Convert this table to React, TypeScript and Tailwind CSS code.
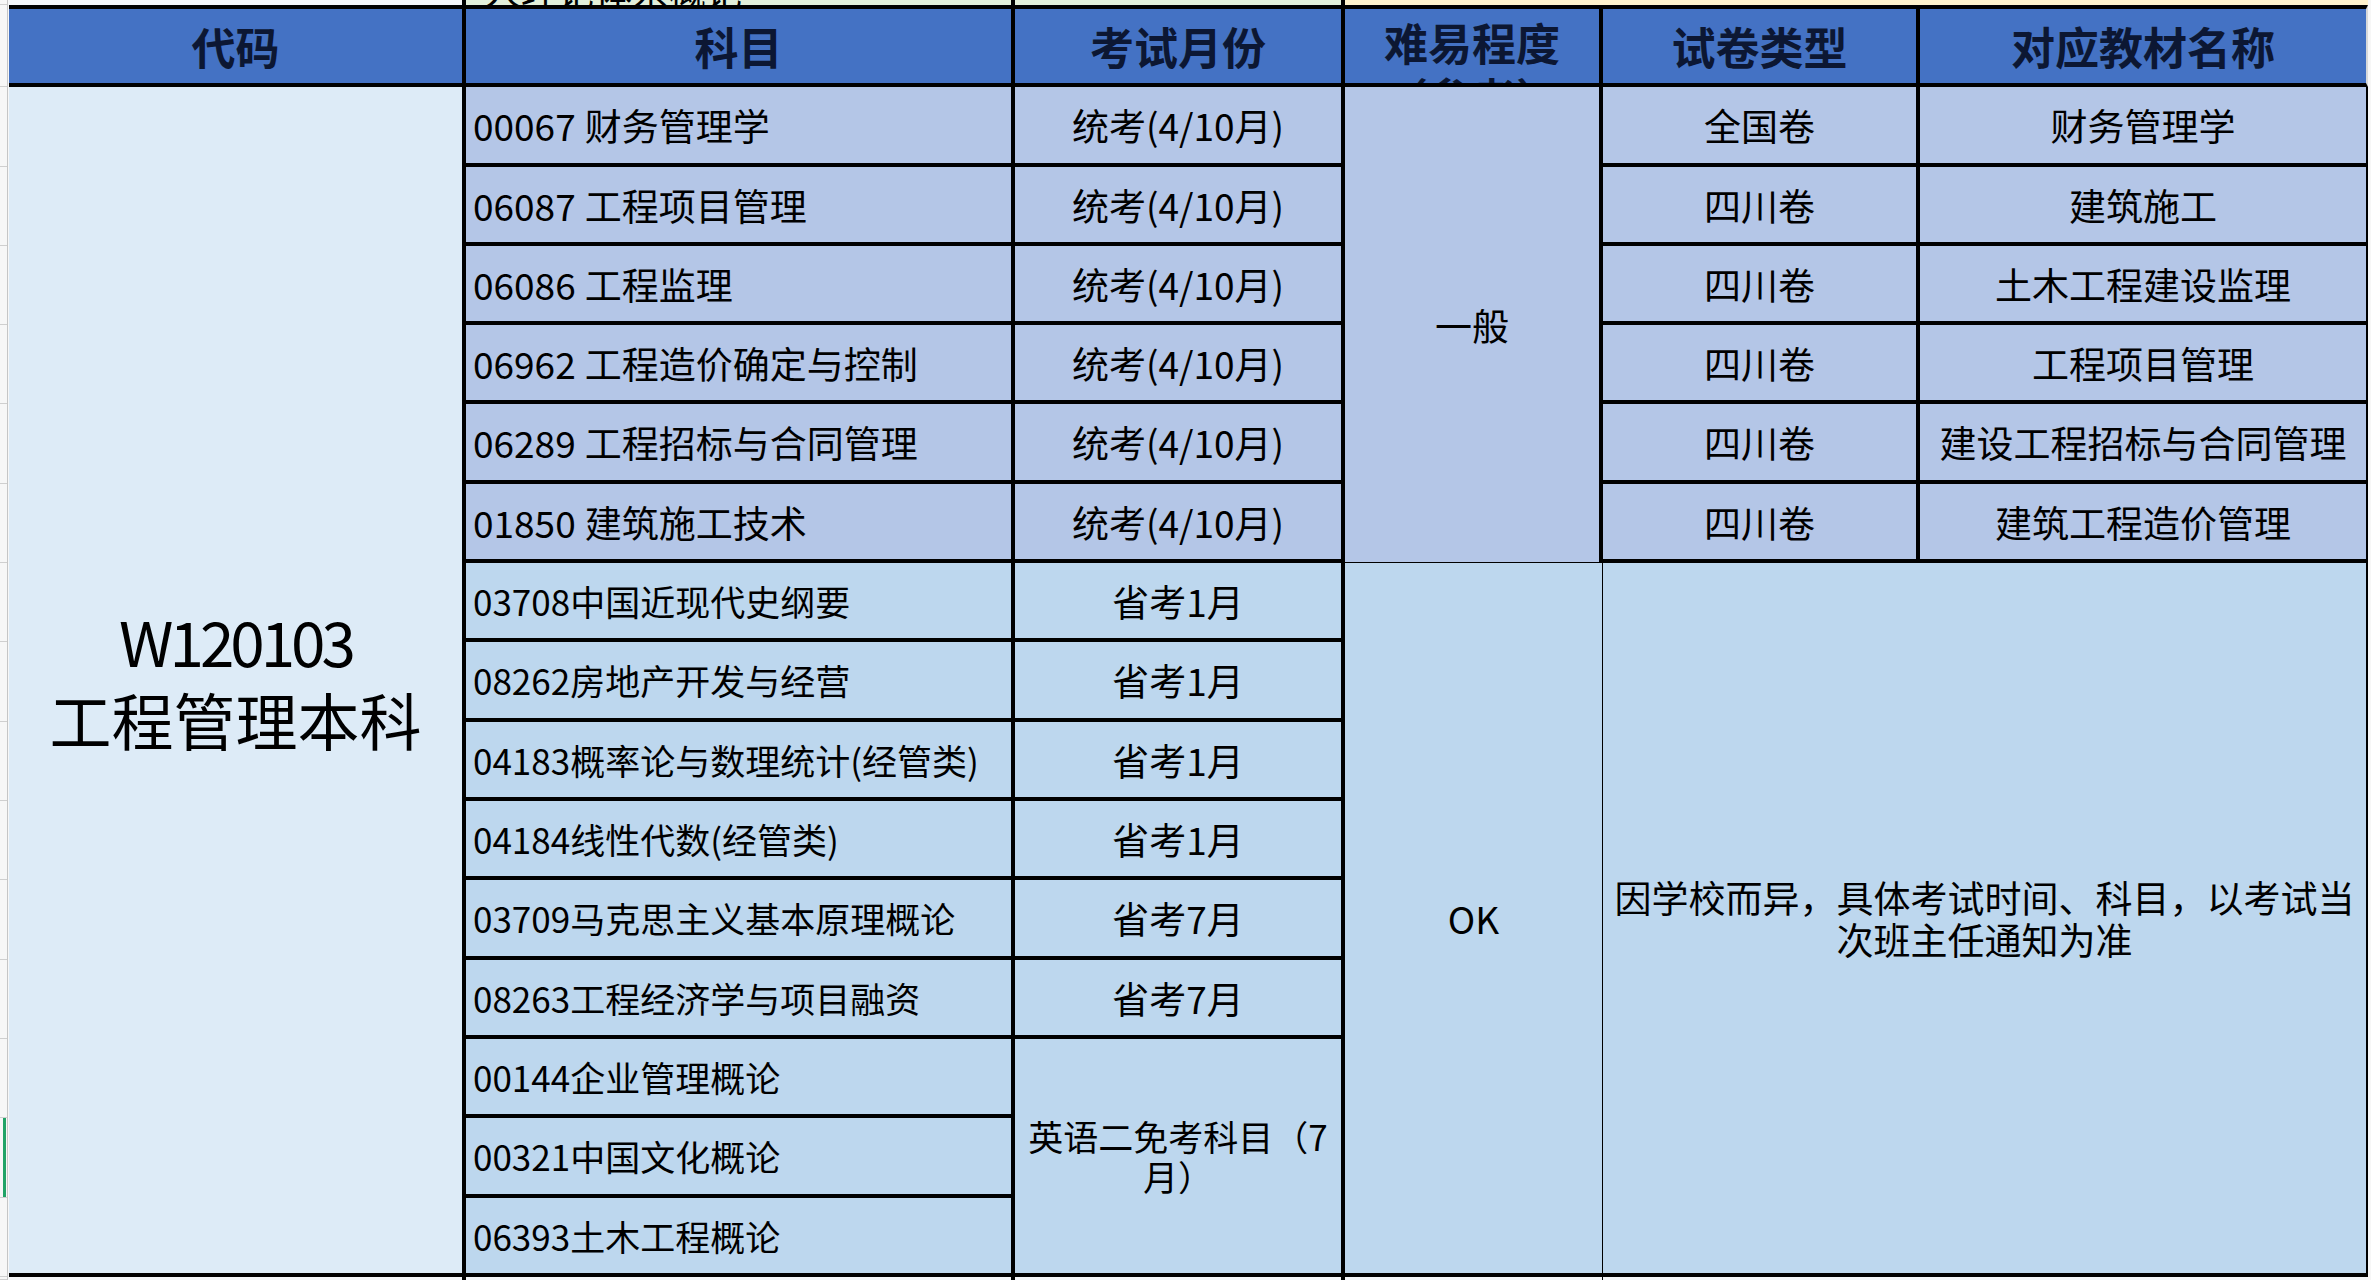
import React from "react";

const FONT = "font-['Noto_Sans_CJK_SC','Noto_Sans_CJK_JP',sans-serif]";

function Margin({ row, green }: { row: string; green?: boolean }) {
  return (
    <div className={`col-start-1 ${row} flex bg-[#f7f7f7]`}>
      <div className="flex w-[7px] border-b border-[#cfcfcf]">
        <div className="w-[3px]" />
        <div className={green ? "w-[3px] bg-[#21a366]" : "w-[3px]"} />
      </div>
      <div className="w-[1px] bg-[#c6c6c6]" />
    </div>
  );
}

const upperSubjects = [
  { row: "row-start-3", code: "00067", name: "财务管理学", paper: "全国卷", book: "财务管理学" },
  { row: "row-start-4", code: "06087", name: "工程项目管理", paper: "四川卷", book: "建筑施工" },
  { row: "row-start-5", code: "06086", name: "工程监理", paper: "四川卷", book: "土木工程建设监理" },
  { row: "row-start-6", code: "06962", name: "工程造价确定与控制", paper: "四川卷", book: "工程项目管理" },
  { row: "row-start-7", code: "06289", name: "工程招标与合同管理", paper: "四川卷", book: "建设工程招标与合同管理" },
  { row: "row-start-8", code: "01850", name: "建筑施工技术", paper: "四川卷", book: "建筑工程造价管理" },
];

const lowerSubjects = [
  { row: "row-start-9", text: "03708中国近现代史纲要", month: "省考1月" },
  { row: "row-start-10", text: "08262房地产开发与经营", month: "省考1月" },
  { row: "row-start-11", text: "04183概率论与数理统计(经管类)", month: "省考1月" },
  { row: "row-start-12", text: "04184线性代数(经管类)", month: "省考1月" },
  { row: "row-start-13", text: "03709马克思主义基本原理概论", month: "省考7月" },
  { row: "row-start-14", text: "08263工程经济学与项目融资", month: "省考7月" },
  { row: "row-start-15", text: "00144企业管理概论", month: "" },
  { row: "row-start-16", text: "00321中国文化概论", month: "" },
  { row: "row-start-17", text: "06393土木工程概论", month: "" },
];

const marginRows = [
  "row-start-1", "row-start-2", "row-start-3", "row-start-4", "row-start-5", "row-start-6",
  "row-start-7", "row-start-8", "row-start-9", "row-start-10", "row-start-11", "row-start-12",
  "row-start-13", "row-start-14", "row-start-15", "row-start-16", "row-start-17", "row-start-18",
];

const headCell =
  "row-start-2 bg-[#4472c4] border-t-4 border-b-4 border-black flex items-center justify-center text-[44px] font-bold text-[#0c1733]";

export default function App() {
  return (
    <div className={`${FONT} w-[2371px] h-[1280px] overflow-hidden bg-[#f7f7f7] text-black`}>
      <div className="grid grid-cols-[9px_457px_549px_330px_258px_317px_448px_3px] grid-rows-[5px_82px_80px_79px_79px_79px_80px_79px_79px_80px_79px_79px_80px_79px_79px_80px_79px_3px]">
        {marginRows.map((r) => (
          <Margin key={r} row={r} green={r === "row-start-16"} />
        ))}

        {/* clipped row above header */}
        <div className="col-start-2 row-start-1 bg-[#f4f6f9] border-r-4 border-black" />
        <div className="col-start-3 row-start-1 bg-[#e2efda] border-r-4 border-black flex items-end overflow-hidden pl-[18px]">
          <div className="text-[37px] leading-[37px] mb-[-4px] whitespace-nowrap">人理论体系概论</div>
        </div>
        <div className="col-start-4 row-start-1 bg-[#e2efda] border-r-4 border-black" />
        <div className="col-start-5 col-span-3 row-start-1 bg-[#fff2cc]" />

        {/* header */}
        <div className={`col-start-2 ${headCell} border-r-4`}>代码</div>
        <div className={`col-start-3 ${headCell} border-r-4`}>科目</div>
        <div className={`col-start-4 ${headCell} border-r-4`}>考试月份</div>
        <div className="col-start-5 row-start-2 bg-[#4472c4] border-t-4 border-b-4 border-r-4 border-black flex flex-col items-center justify-start overflow-hidden pt-[6px] text-[44px] leading-[55px] font-bold text-[#0c1733]">
          <div>难易程度</div>
          <div>（参考）</div>
        </div>
        <div className={`col-start-6 ${headCell} border-r-4`}>试卷类型</div>
        <div className="col-start-7 row-start-2 bg-[#4472c4] border-t-4 border-b-4 border-t-black border-b-black border-r-2 border-r-[#d9d9d9] flex items-center justify-center text-[44px] font-bold text-[#0c1733]">
          对应教材名称
        </div>

        {/* code column */}
        <div className="col-start-2 row-start-3 row-span-15 bg-[#ddebf7] border-r-4 border-b-4 border-black flex flex-col items-center justify-center text-[62px] leading-[79px]">
          <div className="tracking-[-4px]">W120103</div>
          <div>工程管理本科</div>
        </div>

        {/* upper rows */}
        {upperSubjects.map((s) => (
          <React.Fragment key={s.code}>
            <div className={`col-start-3 ${s.row} bg-[#b4c6e7] border-r-4 border-b-4 border-black flex items-center pl-[7px] text-[37px] leading-[40px] whitespace-nowrap`}>
              <span>{s.code}</span>
              <span className="inline-block w-[9px]" />
              <span>{s.name}</span>
            </div>
            <div className={`col-start-4 ${s.row} bg-[#b4c6e7] border-r-4 border-b-4 border-black flex items-center justify-center text-[37px] leading-[40px] whitespace-nowrap`}>
              统考(4/10月)
            </div>
            <div className={`col-start-6 ${s.row} bg-[#b4c6e7] border-r-4 border-b-4 border-black flex items-center justify-center text-[37px] leading-[40px]`}>
              {s.paper}
            </div>
            <div className={`col-start-7 ${s.row} bg-[#b4c6e7] border-r-2 border-b-4 border-black flex items-center justify-center text-[37px] leading-[40px] whitespace-nowrap`}>
              {s.book}
            </div>
          </React.Fragment>
        ))}

        <div className="col-start-5 row-start-3 row-span-6 bg-[#b4c6e7] border-r-4 border-b border-black flex items-center justify-center text-[37px] leading-[40px]">
          一般
        </div>

        {/* lower rows */}
        {lowerSubjects.map((s) => (
          <React.Fragment key={s.text}>
            <div className={`col-start-3 ${s.row} bg-[#bdd7ee] border-r-4 border-b-4 border-black flex items-center pl-[7px] text-[35px] leading-[40px] whitespace-nowrap`}>
              {s.text}
            </div>
            {s.month && (
              <div className={`col-start-4 ${s.row} bg-[#bdd7ee] border-r-4 border-b-4 border-black flex items-center justify-center text-[37px] leading-[40px] whitespace-nowrap`}>
                {s.month}
              </div>
            )}
          </React.Fragment>
        ))}

        <div className="col-start-4 row-start-15 row-span-3 bg-[#bdd7ee] border-r-4 border-b-4 border-black flex flex-col items-center justify-center text-[35px] leading-[40px] whitespace-nowrap">
          <div>英语二免考科目（7</div>
          <div>月）</div>
        </div>

        <div className="col-start-5 row-start-9 row-span-9 bg-[#bdd7ee] border-r border-b-4 border-black flex items-center justify-center text-[37px] leading-[40px]">
          OK
        </div>

        <div className="col-start-6 col-span-2 row-start-9 row-span-9 bg-[#bdd7ee] border-r-2 border-b-4 border-black flex flex-col items-center justify-center text-[37px] leading-[42px] whitespace-nowrap">
          <div>因学校而异，具体考试时间、科目，以考试当</div>
          <div>次班主任通知为准</div>
        </div>

        {/* clipped row below */}
        <div className="col-start-2 row-start-18 bg-[#f4f6f9] border-r-4 border-black" />
        <div className="col-start-3 row-start-18 bg-[#f4f6f9] border-r-4 border-black" />
        <div className="col-start-4 row-start-18 bg-[#f4f6f9] border-r-4 border-black" />
        <div className="col-start-5 row-start-18 bg-[#f4f6f9] border-r border-black" />
        <div className="col-start-6 col-span-2 row-start-18 bg-[#f4f6f9]" />
      </div>
    </div>
  );
}
